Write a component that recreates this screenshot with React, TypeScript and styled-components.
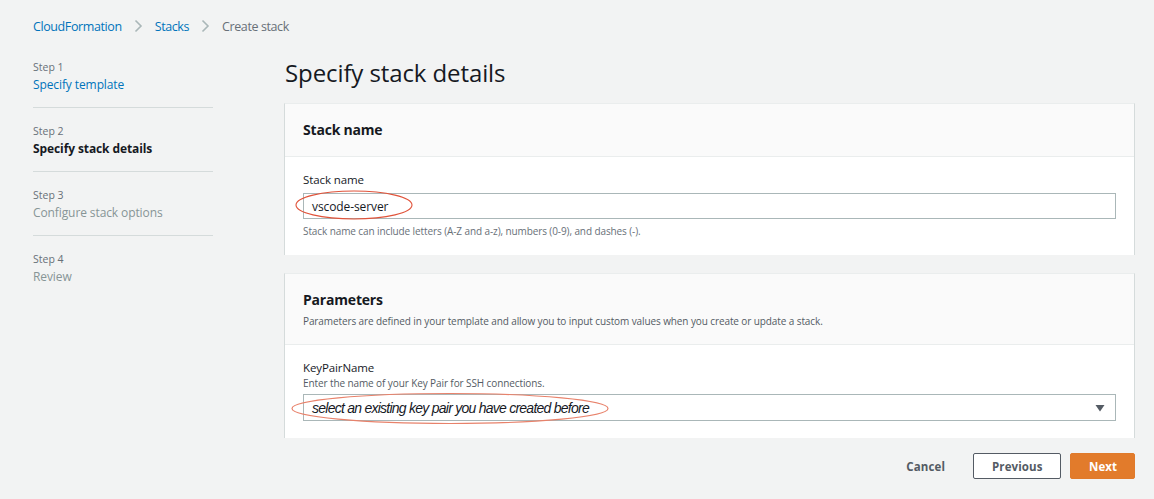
import React from "react";
import styled, { createGlobalStyle } from "styled-components";

const Global = createGlobalStyle`
  html, body { margin: 0; padding: 0; background: #f2f3f3; }
  body { font-family: "Open Sans", "Noto Sans", Arial, sans-serif; color: #16191f; }
  * { box-sizing: border-box; }
`;

const Page = styled.div`
  width: 1154px;
  height: 499px;
  padding: 16px 19px 0 33px;
  overflow: hidden;
`;

const Breadcrumbs = styled.nav`
  display: flex;
  align-items: center;
  height: 20px;
  font-size: 12.5px;
`;

const Crumb = styled.span<{ $current?: boolean }>`
  color: ${(p) => (p.$current ? "#687078" : "#0073bb")};
  letter-spacing: -0.4px;
`;

const Sep = styled.span`
  display: inline-flex;
  width: 33px;
  justify-content: center;
`;

const Layout = styled.div`
  display: grid;
  grid-template-columns: 180px 1fr;
  column-gap: 71px;
  margin-top: 22px;
`;

const Steps = styled.ol`
  list-style: none;
  margin: 0;
  padding: 1px 0 0;
`;

const StepItem = styled.li`
  padding: 0 0 12px;
  border-bottom: 1px solid #d5dbdb;
  & + & { padding-top: 15px; }
  &:last-child { border-bottom: none; }
`;

const StepLabel = styled.div`
  font-size: 10.5px;
  line-height: 16px;
  color: #687078;
`;

const StepTitle = styled.div<{ $state: "link" | "active" | "disabled" }>`
  font-size: 12px;
  line-height: 20px;
  letter-spacing: -0.1px;
  font-weight: ${(p) => (p.$state === "active" ? 700 : 400)};
  color: ${(p) =>
    p.$state === "link" ? "#0073bb" : p.$state === "active" ? "#16191f" : "#879596"};
`;

const Main = styled.main`
  display: flex;
  flex-direction: column;
`;

const Heading = styled.h1`
  margin: 0;
  font-size: 24px;
  font-weight: 400;
  line-height: 30px;
  letter-spacing: -0.1px;
  margin-left: 1px;
`;

const Card = styled.section`
  background: #fff;
  margin-top: 15px;
  border-top: 1px solid #eaeded;
  border-left: 1px solid #d5dbdb;
  border-right: 1px solid #d5dbdb;
  & + & { margin-top: 18px; }
`;

const CardHeader = styled.header`
  background: #fafafa;
  border-bottom: 1px solid #eaeded;
  padding: 16px 18px 16px;
`;

const CardTitle = styled.h2`
  margin: 0;
  font-size: 14px;
  line-height: 20px;
  font-weight: 700;
  letter-spacing: -0.2px;
`;

const CardDesc = styled.p`
  margin: 4px 0 0;
  font-size: 10px;
  line-height: 14px;
  color: #545b64;
  letter-spacing: -0.1px;
`;

const CardBody = styled.div`
  padding: 15px 18px 17px;
`;

const FieldLabel = styled.label`
  display: block;
  font-size: 11.5px;
  line-height: 16px;
  letter-spacing: -0.1px;
`;

const FieldDesc = styled.div`
  font-size: 10px;
  line-height: 14px;
  color: #545b64;
  letter-spacing: -0.1px;
`;

const Control = styled.div<{ $mt: number; $h: number }>`
  position: relative;
  margin-top: ${(p) => p.$mt}px;
  height: ${(p) => p.$h}px;
  border: 1px solid #aab7b8;
  background: #fff;
  display: flex;
  align-items: center;
  padding: 0 10px 0 8px;
`;

const InputText = styled.span`
  font-size: 12px;
  letter-spacing: -0.1px;
  color: #16191f;
`;

const SelectText = styled.span`
  font-family: "Liberation Sans", Arial, sans-serif;
  font-style: italic;
  font-size: 14px;
  letter-spacing: -0.75px;
  color: #16191f;
  flex: 1;
`;

const Hint = styled.div`
  margin-top: 5px;
  font-size: 10px;
  line-height: 14px;
  color: #687078;
  letter-spacing: -0.1px;
`;

const Ellipse = styled.svg<{ $l: number; $t: number; $w: number; $h: number }>`
  position: absolute;
  left: ${(p) => p.$l}px;
  top: ${(p) => p.$t}px;
  width: ${(p) => p.$w}px;
  height: ${(p) => p.$h}px;
  overflow: visible;
  pointer-events: none;
`;

const Actions = styled.div`
  display: flex;
  justify-content: flex-end;
  align-items: center;
  margin-top: 15px;
  gap: 9px;
`;

const Button = styled.button<{ $variant: "link" | "normal" | "primary" }>`
  height: 26px;
  font-family: inherit;
  font-size: 11.5px;
  font-weight: 700;
  letter-spacing: 0.1px;
  border-radius: 2px;
  cursor: pointer;
  padding: 0 18px;
  border: 1px solid
    ${(p) => (p.$variant === "normal" ? "#545b64" : p.$variant === "primary" ? "#e07a2b" : "transparent")};
  background: ${(p) => (p.$variant === "primary" ? "#e27b2b" : p.$variant === "normal" ? "#fff" : "transparent")};
  color: ${(p) => (p.$variant === "primary" ? "#fff" : "#545b64")};
  ${(p) => (p.$variant === "normal" ? "width: 88px;" : "")}
  ${(p) => (p.$variant === "primary" ? "width: 65px;" : "")}
`;

const Chevron = () => (
  <svg width="9" height="14" viewBox="0 0 9 14">
    <path d="M1.5 1.5 L7 7 L1.5 12.5" fill="none" stroke="#aab7b8" strokeWidth="1.6" />
  </svg>
);

const Caret = () => (
  <svg width="10" height="8" viewBox="0 0 10 8">
    <path d="M0.5 1 H9.5 L5 7.5 Z" fill="#545b64" />
  </svg>
);

export default function App() {
  return (
    <>
      <Global />
      <Page>
        <Breadcrumbs>
          <Crumb>CloudFormation</Crumb>
          <Sep><Chevron /></Sep>
          <Crumb>Stacks</Crumb>
          <Sep><Chevron /></Sep>
          <Crumb $current>Create stack</Crumb>
        </Breadcrumbs>
        <Layout>
          <Steps>
            <StepItem>
              <StepLabel>Step 1</StepLabel>
              <StepTitle $state="link">Specify template</StepTitle>
            </StepItem>
            <StepItem>
              <StepLabel>Step 2</StepLabel>
              <StepTitle $state="active">Specify stack details</StepTitle>
            </StepItem>
            <StepItem>
              <StepLabel>Step 3</StepLabel>
              <StepTitle $state="disabled">Configure stack options</StepTitle>
            </StepItem>
            <StepItem>
              <StepLabel>Step 4</StepLabel>
              <StepTitle $state="disabled">Review</StepTitle>
            </StepItem>
          </Steps>
          <Main>
            <Heading>Specify stack details</Heading>
            <Card>
              <CardHeader>
                <CardTitle>Stack name</CardTitle>
              </CardHeader>
              <CardBody>
                <FieldLabel>Stack name</FieldLabel>
                <Control $mt={5} $h={26}>
                  <InputText>vscode-server</InputText>
                  <Ellipse $l={-9} $t={-4} $w={118} $h={30} viewBox="0 0 118 30">
                    <ellipse cx="59" cy="15" rx="58" ry="14" fill="none" stroke="#e0533a" strokeWidth="1.1" />
                  </Ellipse>
                </Control>
                <Hint>Stack name can include letters (A-Z and a-z), numbers (0-9), and dashes (-).</Hint>
              </CardBody>
            </Card>
            <Card>
              <CardHeader>
                <CardTitle>Parameters</CardTitle>
                <CardDesc>
                  Parameters are defined in your template and allow you to input custom values when you create or update a stack.
                </CardDesc>
              </CardHeader>
              <CardBody>
                <FieldLabel>KeyPairName</FieldLabel>
                <FieldDesc>Enter the name of your Key Pair for SSH connections.</FieldDesc>
                <Control $mt={4} $h={27}>
                  <SelectText>select an existing key pair you have created before</SelectText>
                  <Caret />
                  <Ellipse $l={-13} $t={-2} $w={318} $h={31} viewBox="0 0 318 31">
                    <ellipse cx="159" cy="15.5" rx="158" ry="15" fill="none" stroke="#e8826b" strokeWidth="1.2" />
                  </Ellipse>
                </Control>
              </CardBody>
            </Card>
            <Actions>
              <Button $variant="link">Cancel</Button>
              <Button $variant="normal">Previous</Button>
              <Button $variant="primary">Next</Button>
            </Actions>
          </Main>
        </Layout>
      </Page>
    </>
  );
}
